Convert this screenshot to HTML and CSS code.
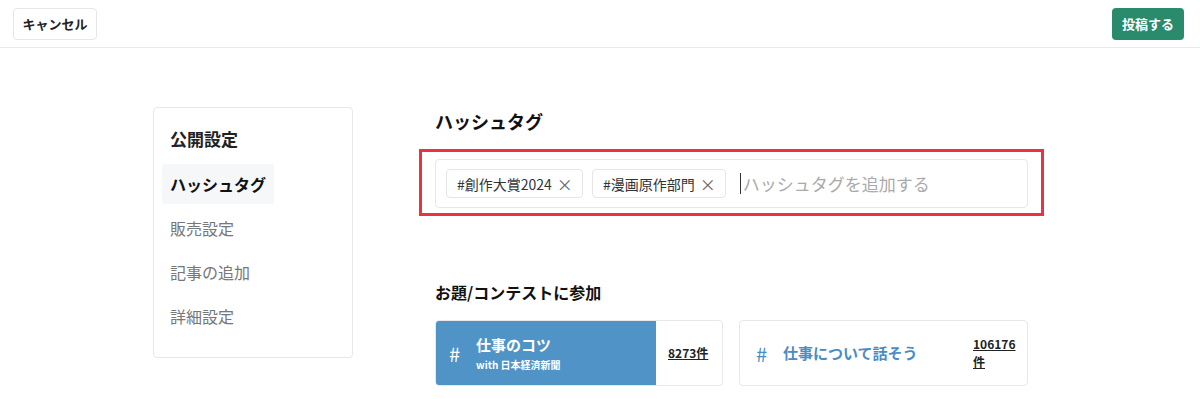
FILE: index.html
```html
<!DOCTYPE html>
<html lang="ja">
<head>
<meta charset="utf-8">
<title>公開設定</title>
<link rel="stylesheet" href="styles.css">
</head>
<body>
<header class="topbar">
  <button class="btn btn-cancel">キャンセル</button>
  <button class="btn btn-post">投稿する</button>
</header>
<div class="layout">
  <aside class="side">
    <div class="side-title">公開設定</div>
    <ul class="side-list">
      <li class="side-item active">ハッシュタグ</li>
      <li class="side-item">販売設定</li>
      <li class="side-item">記事の追加</li>
      <li class="side-item">詳細設定</li>
    </ul>
  </aside>
  <main class="main">
    <h2 class="sec-title">ハッシュタグ</h2>
    <div class="tag-input">
      <span class="tag">#創作大賞2024<span class="tag-x">×</span></span>
      <span class="tag">#漫画原作部門<span class="tag-x">×</span></span>
      <span class="placeholder"><span class="caret"></span>ハッシュタグを追加する</span>
    </div>
    <h3 class="sec-sub">お題/コンテストに参加</h3>
    <div class="cards">
      <div class="card">
        <div class="card-main selected">
          <span class="hash">#</span>
          <div class="card-text">
            <div class="card-name">仕事のコツ</div>
            <div class="card-with">with 日本経済新聞</div>
          </div>
        </div>
        <a class="count">8273件</a>
      </div>
      <div class="card">
        <div class="card-main">
          <span class="hash">#</span>
          <div class="card-text">
            <div class="card-name">仕事について話そう</div>
          </div>
        </div>
        <a class="count">106176件</a>
      </div>
    </div>
  </main>
</div>
</body>
</html>
```

FILE: styles.css
```css
* { box-sizing: border-box; }
html, body { margin: 0; padding: 0; background: #fff; }
body {
  font-family: "Noto Sans CJK JP", "Noto Sans", sans-serif;
  color: #222;
  width: 1200px;
  height: 399px;
  overflow: hidden;
}
.topbar {
  height: 48px;
  border-bottom: 1px solid #ebebeb;
  display: flex;
  align-items: center;
  justify-content: space-between;
  padding: 0 16px 0 13px;
}
.btn {
  font-family: inherit;
  font-size: 13px;
  font-weight: 700;
  height: 32px;
  border-radius: 4px;
  padding: 0;
  cursor: pointer;
}
.btn-cancel {
  width: 84px;
  background: #fff;
  color: #222;
  border: 1px solid #e6e6e6;
}
.btn-post {
  width: 72px;
  background: #2a8a6c;
  color: #fff;
  border: none;
}
.layout {
  display: flex;
  gap: 82px;
  padding: 59px 0 0 153px;
}
.side {
  width: 200px;
  height: 251px;
  border: 1px solid #e8e8e8;
  border-radius: 4px;
  padding: 18px 8px 0 8px;
}
.side-title {
  font-size: 17px;
  font-weight: 700;
  line-height: 26px;
  padding-left: 8px;
  margin-bottom: 12px;
}
.side-list { list-style: none; margin: 0; padding: 0; display: flex; flex-direction: column; gap: 4px; }
.side-item {
  height: 40px;
  line-height: 40px;
  font-size: 16px;
  color: #777;
  padding: 0 8px;
  width: 112px;
  border-radius: 2px;
}
.side-item.active { background: #f5f7f9; color: #111; font-weight: 700; }
.main { width: 593px; padding-top: 1px; }
.sec-title {
  margin: 0 0 25px;
  font-size: 18px;
  line-height: 26px;
  font-weight: 700;
  color: #111;
}
.tag-input {
  position: relative;
  display: flex;
  align-items: center;
  gap: 9px;
  height: 49px;
  border: 1px solid #e8e8e8;
  border-radius: 4px;
  padding: 0 10px;
}
.tag-input::after {
  content: "";
  position: absolute;
  left: -17px;
  right: -17px;
  top: -11px;
  bottom: -9px;
  border: 3px solid #e8343f;
}
.tag {
  display: inline-flex;
  align-items: center;
  height: 29px;
  border: 1px solid #e6e6e6;
  border-radius: 4px;
  padding: 0 9px 0 10px;
  font-size: 14px;
  color: #333;
}
.tag-x { margin-left: 5px; color: #666; font-size: 16px; }
.placeholder {
  display: inline-flex;
  align-items: center;
  margin-left: 5px;
  font-size: 17px;
  color: #aaa;
}
.caret {
  display: inline-block;
  width: 1px;
  height: 21px;
  background: #333;
  margin-right: 2px;
}
.sec-sub {
  margin: 72px 0 16px;
  font-size: 16px;
  line-height: 24px;
  font-weight: 700;
  color: #111;
}
.cards { display: grid; grid-template-columns: 288px 289px; gap: 16px; }
.card {
  display: flex;
  height: 66px;
  border: 1px solid #e8e8e8;
  border-radius: 4px;
  overflow: hidden;
}
.card-main {
  flex: 1;
  display: flex;
  align-items: center;
  gap: 13px;
  padding-left: 16px;
  color: #4a8cc4;
}
.card-main.selected {
  background: #5093c6;
  color: #fff;
  padding-left: 14px;
  margin: -1px 0 -1px -1px;
}
.hash { font-size: 20px; font-weight: 400; width: 14px; }
.card-name { font-size: 15px; font-weight: 700; line-height: 20px; }
.card-with { font-size: 10px; font-weight: 700; line-height: 14px; margin-top: 3px; }
.count {
  width: 66px;
  padding: 0 11px 0 12px;
  display: flex;
  align-items: center;
  font-size: 12px;
  font-weight: 700;
  line-height: 18px;
  color: #222;
  text-decoration: underline;
  word-break: break-all;
}
```
